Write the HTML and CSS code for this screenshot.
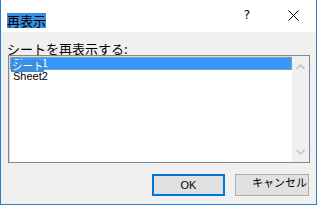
FILE: index.html
```html
<!DOCTYPE html>
<html lang="ja">
  <head>
    <meta charset="utf-8" />
    <title>再表示</title>
    <link rel="stylesheet" href="styles.css">
  </head>
  <body>
    <div class="dialog">
      <div class="titlebar">
        <span class="title">再表示</span>
        <div class="caption-buttons">
          <span class="cap-btn help">?</span>
          <span class="cap-btn close">
            <svg width="11" height="11" viewBox="0 0 11 11"><path d="M0.5 0.5 L10.5 10.5 M10.5 0.5 L0.5 10.5" stroke="#000" stroke-width="1" fill="none"/></svg>
          </span>
        </div>
      </div>
      <div class="content">
        <div class="prompt">シートを再表示する:</div>
        <div class="listbox">
          <ul class="items">
            <li class="item selected">Sheet1<span class="ime">シート</span></li>
            <li class="item">Sheet2</li>
          </ul>
          <div class="scrollbar">
            <svg width="9" height="6" viewBox="0 0 9 6"><path d="M0.5 5 L4.5 1 L8.5 5" stroke="#c4c4c4" stroke-width="1.6" fill="none"/></svg>
            <svg width="9" height="6" viewBox="0 0 9 6"><path d="M0.5 1 L4.5 5 L8.5 1" stroke="#c4c4c4" stroke-width="1.6" fill="none"/></svg>
          </div>
        </div>
        <div class="buttons">
          <button class="btn default">OK</button>
          <button class="btn cancel">キャンセル</button>
        </div>
      </div>
    </div>
  </body>
</html>
```

FILE: styles.css
```css
html, body {
    margin: 0;
    padding: 0;
    background: #fff;
    font-family: "Liberation Sans", "Noto Sans CJK JP", sans-serif;
    color: #000;
}

.dialog {
    width: 317px;
    height: 205px;
    box-sizing: border-box;
    border: 1px solid #2b7bd0;
    border-top: none;
    background: #f0f0f0;
    display: flex;
    flex-direction: column;
}

.titlebar {
    height: 32px;
    flex: none;
    background: #fff;
    display: flex;
    align-items: flex-start;
}
.title {
    margin: 13px 0 0 6px;
    background: #3c8fde;
    font-family: "Noto Sans CJK JP", sans-serif;
    font-size: 13px;
    line-height: 15px;
}
.caption-buttons {
    margin-left: auto;
    display: flex;
}
.cap-btn {
    width: 46px;
    height: 32px;
    display: flex;
    align-items: center;
    justify-content: center;
}
.cap-btn.help {
    font-family: "DejaVu Sans", sans-serif;
    font-size: 12px;
    padding-bottom: 2px;
    box-sizing: border-box;
}
.cap-btn.close {
    padding-bottom: 2px;
    box-sizing: border-box;
}

.content {
    padding: 0 6px 0 7px;
    flex: 1;
    display: flex;
    flex-direction: column;
}
.prompt {
    height: 23px;
    box-sizing: border-box;
    padding-top: 9px;
    margin-left: -1px;
    font-family: "Noto Sans CJK JP", sans-serif;
    font-size: 13px;
    line-height: 15px;
    white-space: nowrap;
}

.listbox {
    height: 108px;
    box-sizing: border-box;
    border: 1px solid #828790;
    box-shadow: inset 1px 1px 0 #dcdcdc;
    background: #fff;
    padding: 1px 0 1px 1px;
    display: flex;
}
.items {
    list-style: none;
    margin: 0;
    padding: 0;
    flex: 1;
}
.item {
    position: relative;
    height: 13px;
    line-height: 13px;
    font-size: 11px;
    padding-left: 3px;
    box-sizing: border-box;
}
.item.selected {
    background: #3399ff;
    color: #fff;
    border: 1px dotted #e0a050;
    padding-left: 2px;
    line-height: 10px;
}
.ime {
    position: absolute;
    left: 0;
    top: 2px;
    width: 33px;
    height: 12px;
    background: #3c8fde;
    color: #fff;
    font-family: "Noto Sans CJK JP", sans-serif;
    font-size: 10.5px;
    line-height: 12px;
    padding-left: 1px;
    box-sizing: border-box;
    white-space: nowrap;
}

.scrollbar {
    width: 17px;
    margin: -1px 0;
    background: #f0f0f0;
    display: flex;
    flex-direction: column;
    align-items: center;
    justify-content: space-between;
    padding: 8px 0 7px;
}

.buttons {
    margin-top: 11px;
    display: flex;
    justify-content: flex-end;
    gap: 10px;
    padding-right: 1px;
}
.btn {
    appearance: none;
    height: 22px;
    margin: 0;
    background: #e1e1e1;
    font-size: 11px;
    color: #000;
    padding: 0;
    box-sizing: border-box;
}
.btn.default {
    width: 73px;
    border: 2px solid #0078d7;
    font-family: "Liberation Sans", sans-serif;
}
.btn.cancel {
    width: 74px;
    border: 1px solid #adadad;
    font-family: "Noto Sans CJK JP", sans-serif;
    text-align: right;
    padding: 0 1px 6px 0;
    line-height: 13px;
}
```
